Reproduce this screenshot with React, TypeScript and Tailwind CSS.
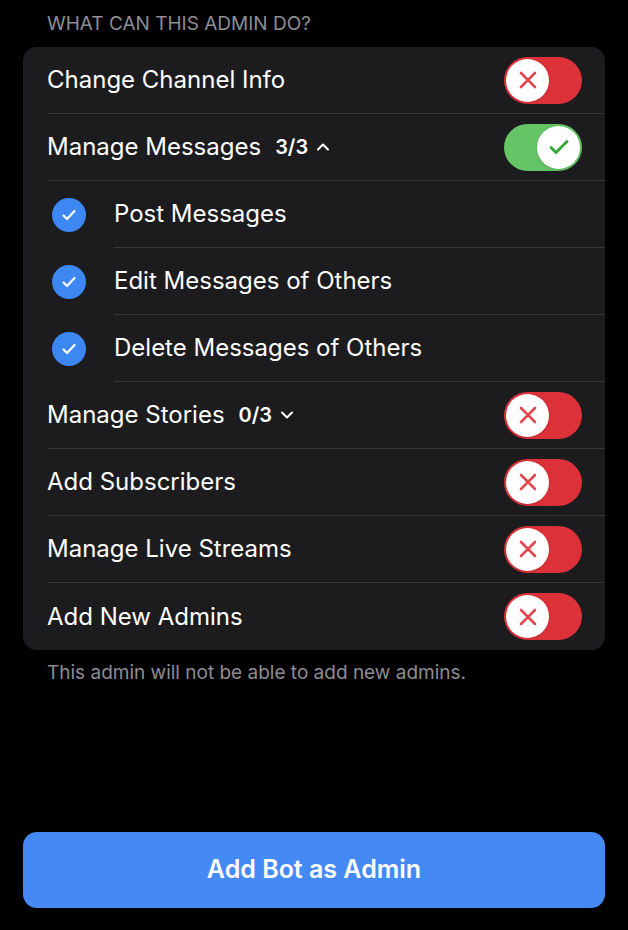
import React from "react";

const font = { fontFamily: "Inter, 'Noto Sans', sans-serif" };

function Toggle({ on }: { on: boolean }) {
  return (
    <div
      className={`flex items-center w-[78px] h-[47px] rounded-full p-[2px] ${
        on ? "bg-[#65c466] justify-end" : "bg-[#dc3139] justify-start"
      }`}
    >
      <div className="w-[43px] h-[43px] rounded-full bg-white flex items-center justify-center shadow">
        {on ? (
          <svg width="24" height="24" viewBox="0 0 24 24" fill="none">
            <path d="M4 12.5l5 5L20 6.5" stroke="#34a83a" strokeWidth="3" strokeLinecap="round" strokeLinejoin="round" />
          </svg>
        ) : (
          <svg width="22" height="22" viewBox="0 0 22 22" fill="none">
            <path d="M4 4l14 14M18 4L4 18" stroke="#e2474d" strokeWidth="2.6" strokeLinecap="round" />
          </svg>
        )}
      </div>
    </div>
  );
}

function Check() {
  return (
    <div className="w-[34px] h-[34px] rounded-full bg-[#3d87f3] flex items-center justify-center">
      <svg width="18" height="18" viewBox="0 0 18 18" fill="none">
        <path d="M3.5 9.5l3.5 3.5 7.5-8" stroke="white" strokeWidth="2.2" strokeLinecap="round" strokeLinejoin="round" />
      </svg>
    </div>
  );
}

function Chevron({ up }: { up: boolean }) {
  return (
    <svg width="14" height="14" viewBox="0 0 14 14" fill="none" className="ml-[8px]">
      <path
        d={up ? "M2 9.5l5-5 5 5" : "M2 4.5l5 5 5-5"}
        stroke="white"
        strokeWidth="2"
        strokeLinecap="round"
        strokeLinejoin="round"
      />
    </svg>
  );
}

type Row = { label: string; on?: boolean; count?: string; open?: boolean };

const rows: Row[] = [
  { label: "Change Channel Info", on: false },
  { label: "Manage Messages", on: true, count: "3/3", open: true },
];

const subRows = ["Post Messages", "Edit Messages of Others", "Delete Messages of Others"];

const rowsAfter: Row[] = [
  { label: "Manage Stories", on: false, count: "0/3", open: false },
  { label: "Add Subscribers", on: false },
  { label: "Manage Live Streams", on: false },
  { label: "Add New Admins", on: false },
];

function ToggleRow({ row, last }: { row: Row; last?: boolean }) {
  return (
    <div className="pl-6">
      <div
        className={`h-[67px] flex items-center justify-between pr-[23px] ${
          last ? "" : "border-b border-[#363638]"
        }`}
      >
        <div className="flex items-center">
          <span className="text-[24px] text-white">{row.label}</span>
          {row.count && (
            <span className="ml-[14px] flex items-center text-[20px] font-semibold text-white">
              {row.count}
              <Chevron up={!!row.open} />
            </span>
          )}
        </div>
        <Toggle on={!!row.on} />
      </div>
    </div>
  );
}

export default function App() {
  return (
    <div className="w-[628px] h-[930px] bg-black flex flex-col" style={font}>
      <div className="px-[47px] pt-[12px] text-[19px] text-[#8d8d93] leading-[24px]">
        WHAT CAN THIS ADMIN DO?
      </div>
      <div className="mx-[23px] mt-[11px] rounded-[14px] bg-[#1c1c1e] overflow-hidden">
        {rows.map((r) => (
          <ToggleRow key={r.label} row={r} />
        ))}
        {subRows.map((s) => (
          <div key={s} className="flex items-center">
            <div className="w-[91px] flex justify-center pl-[1px]">
              <Check />
            </div>
            <div className="flex-1 h-[67px] flex items-center border-b border-[#363638]">
              <span className="text-[24px] text-white">{s}</span>
            </div>
          </div>
        ))}
        {rowsAfter.map((r, i) => (
          <ToggleRow key={r.label} row={r} last={i === rowsAfter.length - 1} />
        ))}
      </div>
      <div className="px-[47px] pt-[9px] text-[19px] text-[#8d8d93]">
        This admin will not be able to add new admins.
      </div>
      <div className="flex-1" />
      <div className="px-[23px] pb-[22px]">
        <button className="w-full h-[76px] rounded-[14px] bg-[#4489f4] text-white text-[25px] font-semibold">
          Add Bot as Admin
        </button>
      </div>
    </div>
  );
}
